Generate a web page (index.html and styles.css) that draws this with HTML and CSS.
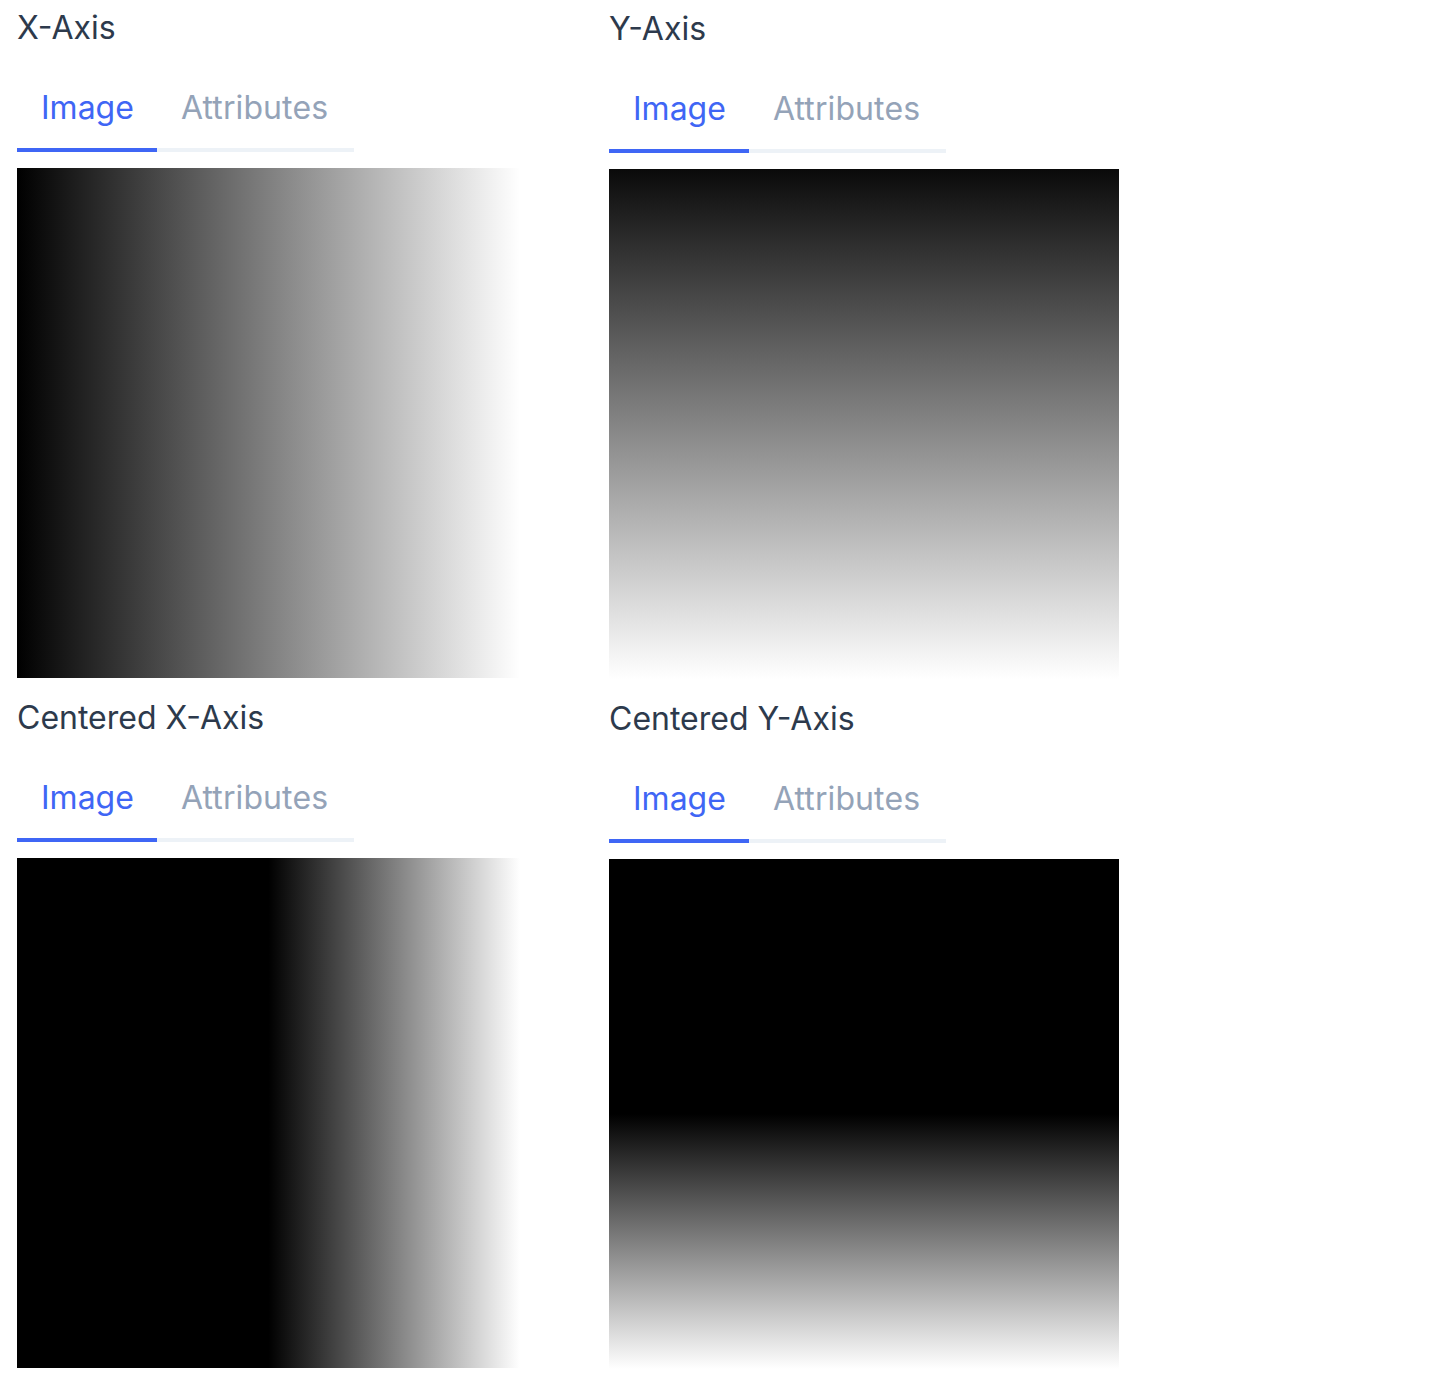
FILE: index.html
```html
<!DOCTYPE html>
<html>
<head>
<meta charset="utf-8">
<link rel="stylesheet" href="styles.css">
</head>
<body>
<div class="grid">
  <div class="col col-left">
    <section class="panel">
      <h3 class="title">X-Axis</h3>
      <div class="tabs"><span class="tab active">Image</span><span class="tab">Attributes</span></div>
      <div class="img img-narrow grad-x"></div>
    </section>
    <section class="panel">
      <h3 class="title">Centered X-Axis</h3>
      <div class="tabs"><span class="tab active">Image</span><span class="tab">Attributes</span></div>
      <div class="img img-narrow grad-cx"></div>
    </section>
  </div>
  <div class="col col-right">
    <section class="panel">
      <h3 class="title">Y-Axis</h3>
      <div class="tabs"><span class="tab active">Image</span><span class="tab">Attributes</span></div>
      <div class="img grad-y"></div>
    </section>
    <section class="panel">
      <h3 class="title">Centered Y-Axis</h3>
      <div class="tabs"><span class="tab active">Image</span><span class="tab">Attributes</span></div>
      <div class="img grad-cy"></div>
    </section>
  </div>
</div>
</body>
</html>
```
FILE: styles.css
```css
* { box-sizing: border-box; }
html, body { margin: 0; padding: 0; background: #fff; }
body {
  font-family: "Inter", "Liberation Sans", sans-serif;
  color: #2d3a4c;
}
.grid {
  display: grid;
  grid-template-columns: 592px 592px;
  padding: 4px 0 0 17px;
}
.col-right { padding-top: 1px; }
.panel + .panel { margin-top: 16px; }
.title {
  margin: 0;
  font-size: 32px;
  font-weight: 400;
  line-height: 48px;
  color: #2d3a4c;
}
.tabs {
  display: flex;
  width: 337px;
  margin-top: 16px;
  border-bottom: 4px solid #edf2f7;
}
.tab {
  font-size: 32px;
  line-height: 48px;
  padding: 16px 24px 16px;
  color: #94a3b8;
  letter-spacing: 0.1px;
  margin-bottom: -4px;
  border-bottom: 4px solid transparent;
}
.tab.active {
  color: #3f66f5;
  border-bottom-color: #3f66f5;
  letter-spacing: 0;
  width: 140px;
}
.img {
  margin-top: 16px;
  width: 510px;
  height: 510px;
}
.img-narrow { width: 503px; }
.grad-x { background: linear-gradient(to right, #000, #fff); }
.grad-y { background: linear-gradient(to bottom, #0a0a0a, #fff); }
.grad-cx { background: linear-gradient(to right, #000 50%, #fff); }
.grad-cy { background: linear-gradient(to bottom, #000 50%, #fff); }
```
